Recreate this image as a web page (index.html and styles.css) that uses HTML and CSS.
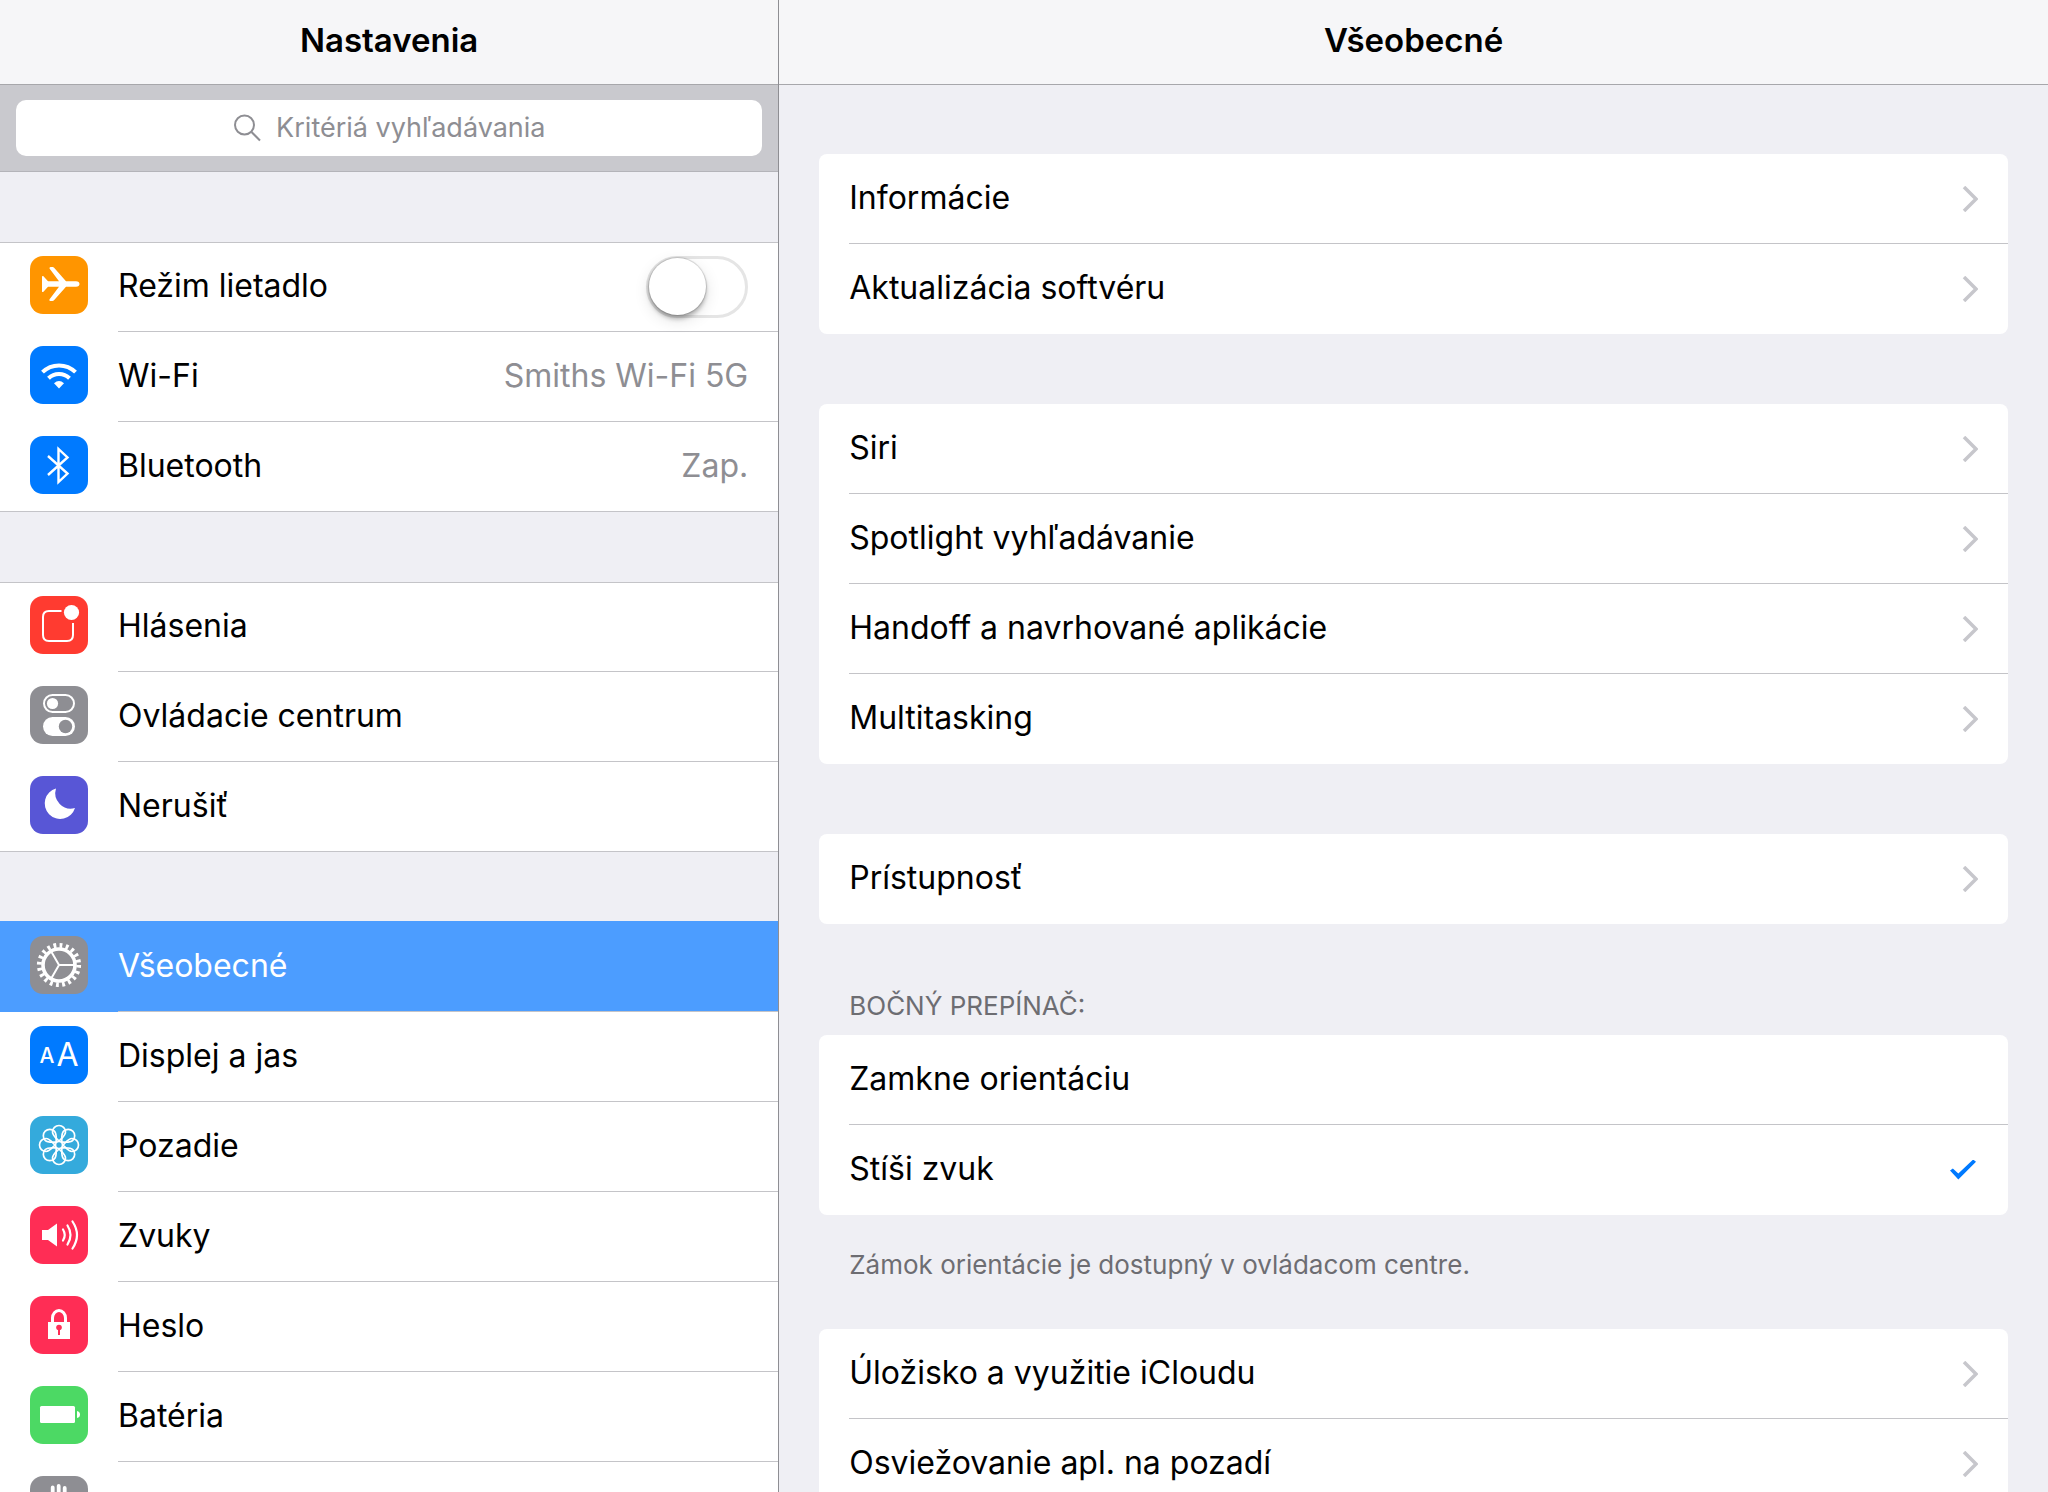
FILE: index.html
```html
<!DOCTYPE html>
<html lang="sk">
<head>
<meta charset="utf-8">
<title>Nastavenia</title>
<meta name="viewport" content="width=device-width, initial-scale=1">
<link rel="stylesheet" href="styles.css">
</head>
<body>
<div class="app">
  <aside class="pane sidebar">
    <header class="bar"><h1 class="bar-title">Nastavenia</h1></header>
    <form class="search" role="search">
      <label class="search-field">
        <svg class="search-icon" viewBox="0 0 28 28" aria-hidden="true"><circle cx="10.500" cy="11" r="9.500"/><path d="M17.500 18l8.500 8.500"/></svg>
        <input class="search-input" type="text" placeholder="Kritériá vyhľadávania" aria-label="Kritériá vyhľadávania">
      </label>
    </form>
    <nav class="groups">
      <ul class="group">
        <li class="row">
          <svg class="icon orange" viewBox="0 0 58 58" aria-hidden="true"><path fill="#fff" d="M12 20.500q.3-.8 1.200-.5L18 25.200H29L19.500 12.500q-.2-1.500 1-1.500h2q1 0 1.600.8L36 25.200h10q3.500.3 3.500 2.800t-3.500 2.800H36L24 44.200q-.6.8-1.600.8h-2q-1.300 0-1-1.500L29 30.800H18L13.200 36q-.9.3-1.200-.5V28z"/></svg>
          <div class="cell">
            <label class="label" for="airplane">Režim lietadlo</label>
            <input class="switch" type="checkbox" id="airplane">
          </div>
        </li>
        <li><a class="row" href="#wifi">
          <svg class="icon blue" viewBox="0 0 58 58" aria-hidden="true"><g fill="none" stroke="#fff" stroke-width="4"><path d="M12.500 26.200a23.500 23.500 0 0 1 33 0"/><path d="M18.500 32.200a15 15 0 0 1 21 0"/></g><path fill="#fff" d="M24 37.200q5-4.400 10 0L29 42.500z"/></svg>
          <span class="cell"><span class="label">Wi-Fi</span><span class="label value">Smiths Wi-Fi 5G</span></span>
        </a></li>
        <li><a class="row" href="#bluetooth">
          <svg class="icon blue" viewBox="0 0 58 58" aria-hidden="true"><path fill="none" stroke="#fff" stroke-width="2.400" d="M18 20l19.500 17.500L28.500 46V13l9 8.500L18 39"/></svg>
          <span class="cell"><span class="label">Bluetooth</span><span class="label value">Zap.</span></span>
        </a></li>
      </ul>
      <ul class="group">
        <li><a class="row" href="#hlasenia">
          <svg class="icon red" viewBox="0 0 58 58" aria-hidden="true"><path fill="none" stroke="#fff" stroke-width="2" d="M31.500 15H19q-6 0-6 6v18q0 6 6 6h18q6 0 6-6V27"/><circle cx="41.500" cy="16.500" r="7.600" fill="#fff"/></svg>
          <span class="cell"><span class="label">Hlásenia</span></span>
        </a></li>
        <li><a class="row" href="#centrum">
          <svg class="icon gray" viewBox="0 0 58 58" aria-hidden="true"><rect x="14" y="9" width="30" height="17" rx="8.500" fill="none" stroke="#fff" stroke-width="2"/><circle cx="22.500" cy="17.500" r="5.600" fill="#fff"/><rect x="13" y="31" width="32" height="19" rx="9.500" fill="#fff"/><circle cx="35.500" cy="40.500" r="6.700" fill="#8e8e93"/></svg>
          <span class="cell"><span class="label">Ovládacie centrum</span></span>
        </a></li>
        <li><a class="row" href="#nerusit">
          <svg class="icon violet" viewBox="0 0 58 58" aria-hidden="true"><path fill="#fff" d="M26 12.500A15.500 15.500 0 1 0 45 32 15.500 15.500 0 0 1 26 12.500z"/></svg>
          <span class="cell"><span class="label">Nerušiť</span></span>
        </a></li>
      </ul>
      <ul class="group">
        <li><a class="row selected" href="#vseobecne" aria-current="page">
          <svg class="icon gray" viewBox="0 0 58 58" aria-hidden="true"><g fill="none" stroke="#fff"><circle cx="29" cy="29" r="19.700" stroke-width="4.800" stroke-dasharray="2.800 3.389"/><circle cx="29" cy="29" r="16" stroke-width="3.600"/><path stroke-width="2" d="M29 29h15M29 29l-7.500-13M29 29l-7.500 13"/></g></svg>
          <span class="cell"><span class="label">Všeobecné</span></span>
        </a></li>
        <li><a class="row" href="#displej">
          <svg class="icon blue" viewBox="0 0 58 58" aria-hidden="true"><g fill="#fff" font-family="Inter, sans-serif"><text x="9.500" y="37" font-size="21" font-weight="500">A</text><text x="26.500" y="40" font-size="32">A</text></g></svg>
          <span class="cell"><span class="label">Displej a jas</span></span>
        </a></li>
        <li><a class="row" href="#pozadie">
          <svg class="icon cyan" viewBox="0 0 58 58" aria-hidden="true"><g fill="none" stroke="#fff" stroke-width="1.700"><g id="petals"><path id="petal" d="M29 25C26 22 22.500 19.500 22.500 16a6.500 6.500 0 0 1 13 0C35.500 19.500 32 22 29 25z"/><use href="#petal" transform="rotate(45 29 29)"/><use href="#petal" transform="rotate(90 29 29)"/><use href="#petal" transform="rotate(135 29 29)"/></g><use href="#petals" transform="rotate(180 29 29)"/><circle cx="29" cy="29" r="3.500"/></g></svg>
          <span class="cell"><span class="label">Pozadie</span></span>
        </a></li>
        <li><a class="row" href="#zvuky">
          <svg class="icon pink" viewBox="0 0 58 58" aria-hidden="true"><path fill="#fff" d="M12 24h6l9-6.500v23L18 34h-6z"/><g fill="none" stroke="#fff" stroke-width="2.200" stroke-linecap="round"><path d="M33 23.500q3.500 5.500 0 11"/><path d="M37.500 19.500q6 9.500 0 19"/><path d="M42.500 15.500q9 13.500 0 27"/></g></svg>
          <span class="cell"><span class="label">Zvuky</span></span>
        </a></li>
        <li><a class="row" href="#heslo">
          <svg class="icon pink" viewBox="0 0 58 58" aria-hidden="true"><path fill="none" stroke="#fff" stroke-width="3" d="M22.500 27v-5a6.500 7.500 0 0 1 13 0v5"/><path fill="#fff" d="M18 26h22v17H18z"/><g fill="#ff2d55"><circle cx="29" cy="31.500" r="2.800"/><path d="M28 32h2v7h-2z"/></g></svg>
          <span class="cell"><span class="label">Heslo</span></span>
        </a></li>
        <li><a class="row" href="#bateria">
          <svg class="icon green" viewBox="0 0 58 58" aria-hidden="true"><rect x="10" y="20" width="35" height="17" rx="1.500" fill="#fff"/><path fill="#fff" d="M47 25q3 .5 3 3.500t-3 3.500z"/></svg>
          <span class="cell"><span class="label">Batéria</span></span>
        </a></li>
        <li><a class="row" href="#sukromie">
          <svg class="icon gray" viewBox="0 0 58 58" aria-hidden="true"><g stroke="#fff" stroke-width="3.800" stroke-linecap="round"><path d="M22.700 11.500v18M28.700 10v20M34.700 12v18M40.700 18v14"/></g><path fill="#fff" d="M21 28h21.600v8q0 12-11 12-6 0-10-7l-7-10q2-3 6 1z"/></svg>
          <span class="cell"><span class="label">Súkromie</span></span>
        </a></li>
      </ul>
    </nav>
  </aside>

  <main class="pane detail">
    <header class="bar"><h2 class="bar-title">Všeobecné</h2></header>
    <div class="cards">
      <ul class="card">
        <li><a class="item" href="#informacie"><span class="label">Informácie</span><svg class="chevron" viewBox="0 0 16 26" aria-hidden="true"><path d="M2 1l12 12L2 25"/></svg></a></li>
        <li><a class="item" href="#aktualizacia"><span class="label">Aktualizácia softvéru</span><svg class="chevron" viewBox="0 0 16 26" aria-hidden="true"><path d="M2 1l12 12L2 25"/></svg></a></li>
      </ul>
      <ul class="card">
        <li><a class="item" href="#siri"><span class="label">Siri</span><svg class="chevron" viewBox="0 0 16 26" aria-hidden="true"><path d="M2 1l12 12L2 25"/></svg></a></li>
        <li><a class="item" href="#spotlight"><span class="label">Spotlight vyhľadávanie</span><svg class="chevron" viewBox="0 0 16 26" aria-hidden="true"><path d="M2 1l12 12L2 25"/></svg></a></li>
        <li><a class="item" href="#handoff"><span class="label">Handoff a navrhované aplikácie</span><svg class="chevron" viewBox="0 0 16 26" aria-hidden="true"><path d="M2 1l12 12L2 25"/></svg></a></li>
        <li><a class="item" href="#multitasking"><span class="label">Multitasking</span><svg class="chevron" viewBox="0 0 16 26" aria-hidden="true"><path d="M2 1l12 12L2 25"/></svg></a></li>
      </ul>
      <ul class="card">
        <li><a class="item" href="#pristupnost"><span class="label">Prístupnosť</span><svg class="chevron" viewBox="0 0 16 26" aria-hidden="true"><path d="M2 1l12 12L2 25"/></svg></a></li>
      </ul>
      <fieldset class="choice">
        <legend class="caption">BOČNÝ PREPÍNAČ:</legend>
        <div class="card">
          <label class="item"><span class="label">Zamkne orientáciu</span><input class="check" type="radio" name="side"></label>
          <label class="item"><span class="label">Stíši zvuk</span><input class="check" type="radio" name="side" checked></label>
        </div>
        <p class="note">Zámok orientácie je dostupný v ovládacom centre.</p>
      </fieldset>
      <ul class="card">
        <li><a class="item" href="#icloud"><span class="label">Úložisko a využitie iCloudu</span><svg class="chevron" viewBox="0 0 16 26" aria-hidden="true"><path d="M2 1l12 12L2 25"/></svg></a></li>
        <li><a class="item" href="#osviezovanie"><span class="label">Osviežovanie apl. na pozadí</span><svg class="chevron" viewBox="0 0 16 26" aria-hidden="true"><path d="M2 1l12 12L2 25"/></svg></a></li>
      </ul>
    </div>
  </main>
</div>
</body>
</html>
```
FILE: styles.css
```css
* {
  box-sizing: border-box;
}

body {
  margin: 0;
  background: #efeff4;
  color: #000;
  font-family: Inter, "Liberation Sans", sans-serif;
  font-size: 32px;
  line-height: 40px;
}

ul {
  margin: 0;
  padding: 0;
  list-style: none;
}

a {
  color: inherit;
  text-decoration: none;
}

.app {
  display: grid;
  grid-template-columns: calc(38% + 1px) 1fr;
  height: 100vh;
  overflow: hidden;
}

.pane {
  min-width: 0;
  overflow: hidden;
}

.sidebar {
  border-right: 1px solid #8e8e93;
}

.bar {
  display: flex;
  align-items: center;
  justify-content: center;
  height: 85px;
  padding-bottom: 4px;
  border-bottom: 1px solid #a7a7ab;
  background: #f6f6f8;
}

.bar-title {
  margin: 0;
  font-size: 33px;
  font-weight: 600;
}

.label {
  padding-bottom: 2px;
}

/* Search */

.search {
  padding: 15px 16px;
  border-bottom: 1px solid #b4b4b9;
  background: #c9c9ce;
}

.search-field {
  display: flex;
  align-items: center;
  justify-content: center;
  gap: 14px;
  height: 56px;
  border-radius: 10px;
  background: #fff;
}

.search-icon {
  width: 28px;
  height: 28px;
  fill: none;
  stroke: #8e8e93;
  stroke-width: 2;
}

.search-input {
  width: 268px;
  padding: 0;
  border: 0;
  outline: 0;
  background: none;
  font: inherit;
  font-size: 27px;
  field-sizing: content;
}

.search-input::placeholder {
  color: #8e8e93;
}

/* Sidebar list */

.group {
  margin-top: 70px;
  background: #fff;
  box-shadow: inset 0 1px #c4c4c8, inset 0 -1px #c4c4c8;
}

.row {
  display: flex;
  align-items: center;
  gap: 30px;
  height: 90px;
  padding-left: 30px;
}

.icon {
  flex: none;
  width: 58px;
  height: 58px;
  margin-bottom: 4px;
  border-radius: 13px;
}

.orange { background: #ff9500; }
.blue { background: #007aff; }
.red { background: #ff3b30; }
.gray { background: #8e8e93; }
.violet { background: #5856d6; }
.cyan { background: #34aadc; }
.pink { background: #ff2d55; }
.green { background: #4cd964; }

.cell {
  display: flex;
  flex: 1;
  align-items: center;
  justify-content: space-between;
  height: 100%;
  padding-right: 30px;
  border-bottom: 1px solid #c4c4c8;
}

.value {
  color: #8e8e93;
}

.selected {
  background: #4c9dff;
  box-shadow: 0 -1px #4c9dff;
  color: #fff;
}

.switch {
  display: flex;
  align-items: center;
  width: 102px;
  height: 62px;
  margin: 0;
  border: 3px solid #e5e5e5;
  border-radius: 31px;
  background: #fff;
  appearance: none;
}

.switch::before {
  width: 57px;
  height: 57px;
  border-radius: 50%;
  background: #fff;
  box-shadow: 0 0 1px 1px rgba(0, 0, 0, 0.15), 0 4px 4px rgba(0, 0, 0, 0.25), 0 5px 16px rgba(0, 0, 0, 0.12);
  content: "";
}

.switch:checked {
  justify-content: flex-end;
  border-color: #4cd964;
  background: #4cd964;
}

/* Detail cards */

.cards {
  padding: 69px 40px;
}

.choice {
  min-width: 0;
  margin: 0;
  padding: 0;
  border: 0;
}

.cards > * + * {
  margin-top: 70px;
}

.cards > .choice + .card {
  margin-top: 48px;
}

.card {
  overflow: hidden;
  border-radius: 8px;
  background: #fff;
}

.item {
  display: flex;
  align-items: center;
  justify-content: space-between;
  height: 90px;
  margin-left: 30px;
  padding-right: 30px;
  border-bottom: 1px solid #c4c4c8;
}

.card > :last-child.item,
.card > :last-child > .item {
  border-bottom-color: transparent;
}

.chevron {
  width: 16px;
  height: 26px;
  fill: none;
  stroke: #c7c7cc;
  stroke-width: 3.5;
}

.caption,
.note {
  margin: 0;
  color: #6d6d72;
  font-size: 26px;
}

.caption {
  padding: 0 30px 17px;
  line-height: 24px;
}

.note {
  padding: 34px 30px 0;
  line-height: 32px;
}

.check {
  width: 26px;
  height: 20px;
  margin: 0 2px 0 0;
  appearance: none;
}

.check:checked {
  background: #007aff;
  clip-path: polygon(0 55%, 11% 45%, 32% 70%, 89% 0, 100% 11%, 32% 100%);
}
```
